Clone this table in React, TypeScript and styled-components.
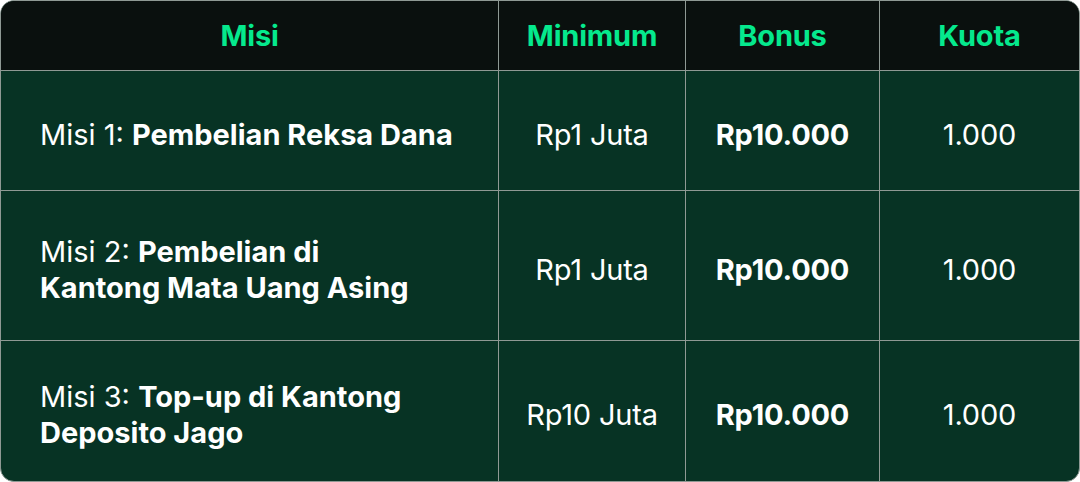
import { createGlobalStyle } from 'styled-components';
import styled from 'styled-components';

interface Mission {
  label: string;
  title: string;
  minimum: string;
  bonus: string;
  quota: string;
  height: number;
}

const missions: Mission[] = [
  { label: 'Misi 1:', title: 'Pembelian Reksa Dana', minimum: 'Rp1 Juta', bonus: 'Rp10.000', quota: '1.000', height: 120 },
  { label: 'Misi 2:', title: 'Pembelian di\nKantong Mata Uang Asing', minimum: 'Rp1 Juta', bonus: 'Rp10.000', quota: '1.000', height: 150 },
  { label: 'Misi 3:', title: 'Top-up di Kantong\nDeposito Jago', minimum: 'Rp10 Juta', bonus: 'Rp10.000', quota: '1.000', height: 141 },
];

const GlobalStyle = createGlobalStyle`
  html, body {
    margin: 0;
    padding: 0;
    background: #ffffff;
  }
  body {
    font-family: Inter, 'Noto Sans', sans-serif;
  }
`;

const Table = styled.div`
  width: 1080px;
  height: 482px;
  box-sizing: border-box;
  border: 1px solid #8f9994;
  border-radius: 14px;
  overflow: hidden;
  display: grid;
  grid-template-columns: 498px 187px 194px 1fr;
  grid-template-rows: 69px repeat(3, auto);
  background: #073324;
`;

const HeadCell = styled.div<{ $last?: boolean }>`
  background: #0a100e;
  color: #05e98d;
  font-size: 29px;
  font-weight: 700;
  letter-spacing: -0.2px;
  display: flex;
  align-items: center;
  justify-content: center;
  border-right: ${(p) => (p.$last ? 'none' : '1px solid #8f9994')};
`;

const Cell = styled.div<{ $last?: boolean; $h: number; $bold?: boolean; $left?: boolean }>`
  height: ${(p) => p.$h}px;
  box-sizing: border-box;
  color: #ffffff;
  font-size: 29px;
  line-height: 36px;
  letter-spacing: ${(p) => (p.$left ? '0' : '-0.2px')};
  font-weight: ${(p) => (p.$bold ? 700 : 400)};
  display: flex;
  align-items: center;
  justify-content: ${(p) => (p.$left ? 'flex-start' : 'center')};
  padding: ${(p) => (p.$left ? '8px 39px 0' : '8px 0 0')};
  border-right: ${(p) => (p.$last ? 'none' : '1px solid #8f9994')};
  border-top: 1px solid #8f9994;
`;

const MissionText = styled.div`
  white-space: pre-line;
`;

const Strong = styled.b`
  font-weight: 700;
`;

export default function App() {
  return (
    <>
      <GlobalStyle />
      <Table>
        <HeadCell>Misi</HeadCell>
        <HeadCell>Minimum</HeadCell>
        <HeadCell>Bonus</HeadCell>
        <HeadCell $last>Kuota</HeadCell>
        {missions.map((m) => (
          <>
            <Cell key={m.label + 'a'} $h={m.height} $left>
              <MissionText>
                {m.label} <Strong>{m.title}</Strong>
              </MissionText>
            </Cell>
            <Cell key={m.label + 'b'} $h={m.height}>{m.minimum}</Cell>
            <Cell key={m.label + 'c'} $h={m.height} $bold>{m.bonus}</Cell>
            <Cell key={m.label + 'd'} $h={m.height} $last>{m.quota}</Cell>
          </>
        ))}
      </Table>
    </>
  );
}
